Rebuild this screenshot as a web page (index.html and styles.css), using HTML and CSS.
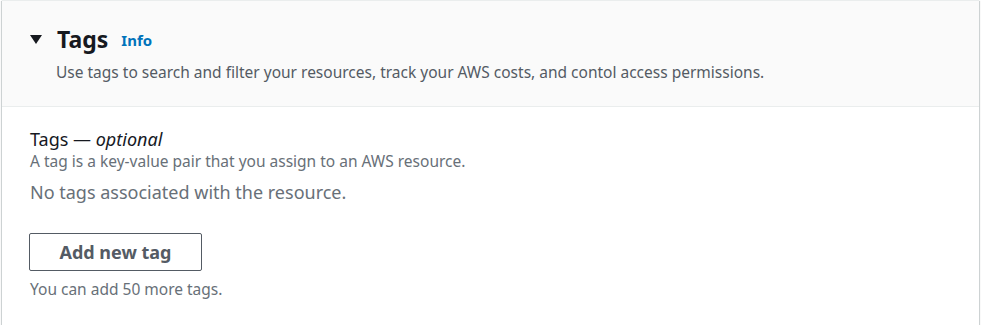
FILE: index.html
```html
<!DOCTYPE html>
<html lang="en">

<head>
    <meta charset="UTF-8">
    <meta name="viewport" content="width=device-width, initial-scale=1.0">
    <title>Tags</title>
    <link rel="stylesheet" href="styles.css">
</head>

<body>
    <div class="container">
        <div class="container-header">
            <h2 class="title">
                <span class="caret"></span>
                <span>Tags</span>
                <a class="info" href="#">Info</a>
            </h2>
            <p class="description">Use tags to search and filter your resources, track your AWS costs, and contol access permissions.</p>
        </div>

        <div class="container-body">
            <div class="label">Tags — <i>optional</i></div>
            <div class="hint">A tag is a key-value pair that you assign to an AWS resource.</div>
            <div class="empty">No tags associated with the resource.</div>
            <button class="add-tag">Add new tag</button>
            <div class="limit">You can add 50 more tags.</div>
        </div>
    </div>
</body>

</html>
```

FILE: styles.css
```css
body {
    margin: 0;
    padding: 0;
    background: #fff;
    font-family: "Noto Sans", "Open Sans", Arial, sans-serif;
}

.container {
    margin: 0 3px 0 2px;
    background: #fff;
    border-top: 1px solid #eaeded;
    box-shadow: 0 1px 1px 0 rgba(0, 28, 36, 0.3), 1px 1px 1px 0 rgba(0, 28, 36, 0.15), -1px 1px 1px 0 rgba(0, 28, 36, 0.15);
    height: 325px;
    box-sizing: border-box;
}

.container-header {
    background: #fafafa;
    border-bottom: 1px solid #eaeded;
    padding: 22px 28px 0 28px;
    height: 106px;
    box-sizing: border-box;
}

.title {
    margin: 0;
    display: flex;
    align-items: center;
    font-size: 23px;
    font-weight: 700;
    color: #16191f;
    line-height: 30px;
}

.caret {
    width: 0;
    height: 0;
    border-left: 6px solid transparent;
    border-right: 6px solid transparent;
    border-top: 9px solid #16191f;
    margin-right: 15px;
}

.info {
    margin-left: 13px;
    font-size: 15px;
    color: #0073bb;
    text-decoration: none;
    padding-top: 2px;
}

.description {
    margin: 6px 0 0 26px;
    font-size: 15.5px;
    line-height: 22px;
    color: #545b64;
}

.container-body {
    padding: 20px 28px 0 27px;
}

.label,
.hint,
.empty,
.limit {
    padding-left: 1px;
}

.label {
    font-size: 18px;
    line-height: 24px;
    color: #16191f;
}

.hint {
    font-size: 15.5px;
    line-height: 20px;
    color: #687078;
}

.empty {
    margin-top: 9px;
    font-size: 18px;
    line-height: 24px;
    color: #687078;
}

.add-tag {
    margin-top: 29px;
    width: 173px;
    height: 38px;
    background: #fff;
    border: 1px solid #545b64;
    border-radius: 2px;
    font-family: inherit;
    font-size: 18px;
    font-weight: 700;
    color: #545b64;
    cursor: pointer;
}

.limit {
    margin-top: 8px;
    font-size: 15.5px;
    line-height: 20px;
    color: #687078;
}
```
